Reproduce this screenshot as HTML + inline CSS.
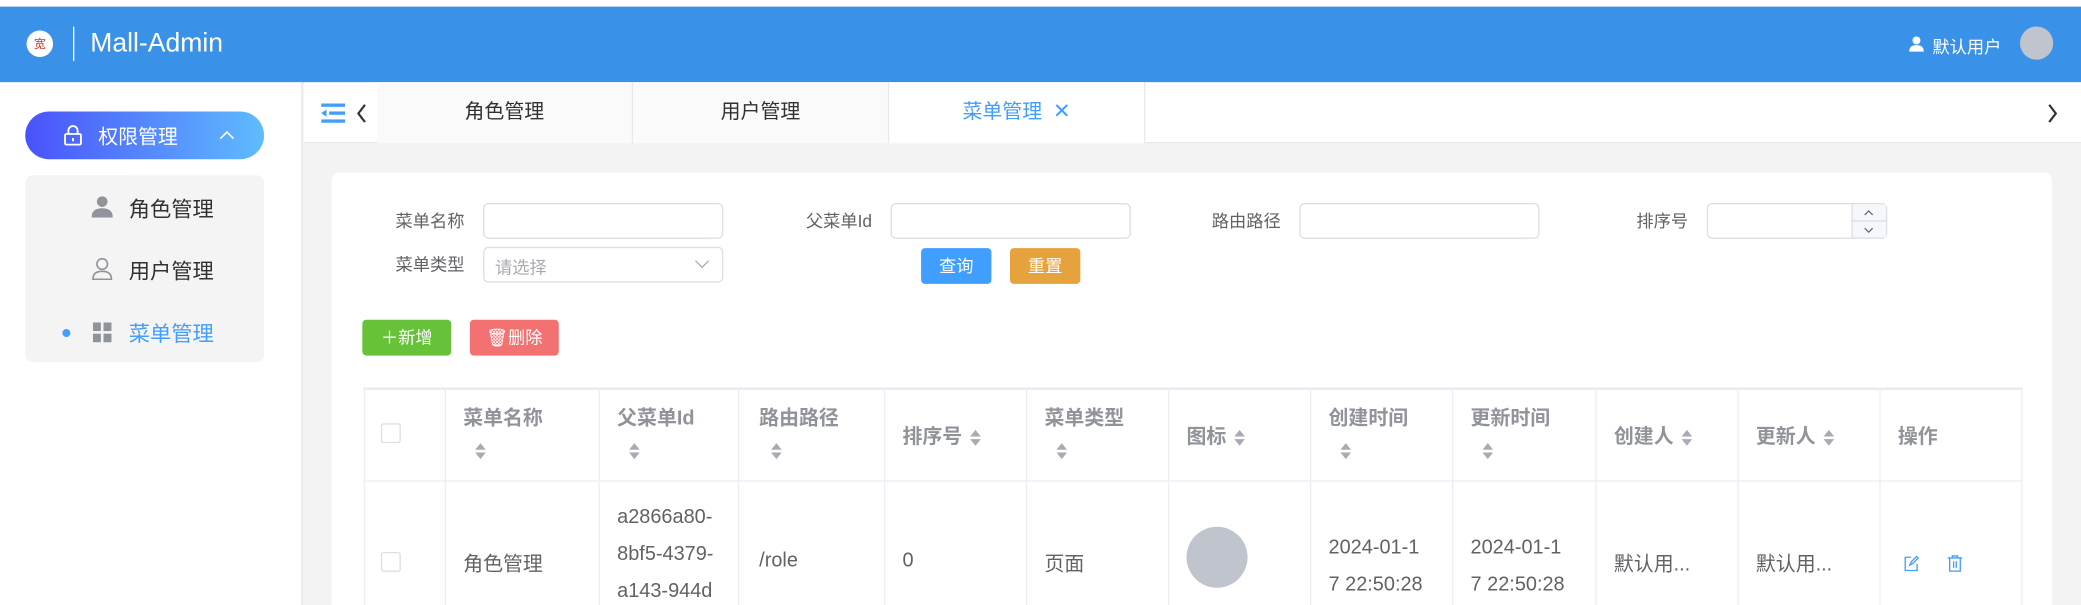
<!DOCTYPE html>
<html><head><meta charset="utf-8"><style>
*{box-sizing:border-box;margin:0;padding:0}
html,body{width:2081px;height:605px;overflow:hidden;background:#fff}
#root{position:absolute;left:0;top:0;width:1568px;height:456px;transform:scale(1.3272,1.3268);transform-origin:0 0;font-family:"Liberation Sans","Noto Sans CJK SC",sans-serif;background:#f3f3f3;overflow:hidden}
.a{position:absolute}
.hdr{left:0;top:5px;width:1568px;height:57px;background:#3a92e8}
.sb{left:0;top:62px;width:228px;height:400px;background:#fff;border-right:1px solid #e6e6e6}
.pill{left:19px;top:84px;width:180px;height:36px;border-radius:18px;background:linear-gradient(90deg,#4a52fb,#5fbcfe);color:#fff;font-size:15px}
.sub{left:19px;top:132px;width:180px;height:141px;border-radius:6px;background:#f4f4f5}
.mi{font-size:16px;color:#303133}
.tabs{left:229px;top:62px;width:1339px;height:46px;background:#fff;border-bottom:1px solid #e8e8e8}
.tab{top:0;height:46px;width:193px;text-align:center;line-height:46px;font-size:15px;color:#303133;border-right:1px solid #e8e8e8;background:#fafafa}
.card{left:250px;top:130px;width:1296px;height:340px;background:#fff;border-radius:6px}
.lbl{font-size:13px;color:#606266;text-align:right;width:100px;line-height:27px}
.inp{height:27px;border:1px solid #dcdfe6;border-radius:4px;background:#fff}
.btn{height:27px;line-height:27px;text-align:center;color:#fff;font-size:13px;border-radius:3px}
.th{font-size:15px;font-weight:bold;color:#909399}
.td{font-size:15px;color:#606266}
.car{display:inline-block;width:8px;height:12px;position:relative;vertical-align:middle}
.car.a{position:absolute}
.car:before{content:"";position:absolute;left:0;top:0;border:4px solid transparent;border-bottom:5px solid #a8abb2;border-top:0}
.car:after{content:"";position:absolute;left:0;top:7px;border:4px solid transparent;border-top:5px solid #a8abb2;border-bottom:0}
.vl{top:292px;width:1px;height:170px;background:#ebeef5}
.cb{width:15px;height:15px;border:1px solid #dcdfe6;border-radius:2px;background:#fff}
</style></head><body><div id="root">
<div class="a" style="left:0;top:0;width:1568px;height:5px;background:#fff"></div>
<div class="a hdr"></div>
<div class="a" style="left:20px;top:23px;width:20px;height:20px;border-radius:50%;background:#fff;color:#c0392b;font-size:9px;text-align:center;line-height:20px">宽</div>
<div class="a" style="left:55px;top:20px;width:1px;height:26px;background:#fff"></div>
<div class="a" style="left:68px;top:22px;color:#fff;font-size:20px">Mall-Admin</div>
<svg class="a" style="left:1438px;top:27px" width="12" height="12" viewBox="0 0 12 12"><circle cx="6" cy="3.5" r="3" fill="#fff"/><path d="M0.5 12 Q0.5 7 6 7 Q11.5 7 11.5 12Z" fill="#fff"/></svg>
<div class="a" style="left:1456px;top:25px;color:#fff;font-size:13px">默认用户</div>
<div class="a" style="left:1522px;top:20px;width:25px;height:25px;border-radius:50%;background:#c0c4cc"></div>

<div class="a sb"></div>
<div class="a pill"></div>
<svg class="a" style="left:48px;top:94px" width="14" height="16" viewBox="0 0 14 16"><rect x="1" y="7" width="12" height="8" rx="1" fill="none" stroke="#fff" stroke-width="1.4"/><path d="M3.5 7V4.5a3.5 3.5 0 0 1 7 0V7" fill="none" stroke="#fff" stroke-width="1.4"/><path d="M7 10v2.5" stroke="#fff" stroke-width="1.4"/></svg>
<div class="a" style="left:74px;top:92px;color:#fff;font-size:15px">权限管理</div>
<svg class="a" style="left:165px;top:98px" width="12" height="8" viewBox="0 0 12 8"><path d="M1 6.5L6 1.5 11 6.5" fill="none" stroke="#fff" stroke-width="1.2"/></svg>
<div class="a sub"></div>
<svg class="a" style="left:69px;top:147px" width="16" height="17" viewBox="0 0 16 17"><circle cx="8" cy="5" r="4" fill="#909399"/><path d="M0 17 Q0 10 8 10 Q16 10 16 17Z" fill="#909399"/></svg>
<div class="a mi" style="left:97px;top:144px">角色管理</div>
<svg class="a" style="left:69px;top:194px" width="16" height="17" viewBox="0 0 16 17"><circle cx="8" cy="5" r="4" fill="none" stroke="#909399" stroke-width="1.2"/><path d="M1 16.5 Q1 10.5 8 10.5 Q15 10.5 15 16.5Z" fill="none" stroke="#909399" stroke-width="1.2"/></svg>
<div class="a mi" style="left:97px;top:191px">用户管理</div>
<div class="a" style="left:47px;top:248px;width:6px;height:6px;border-radius:50%;background:#409eff"></div>
<svg class="a" style="left:70px;top:243px" width="14" height="15" viewBox="0 0 14 15"><rect x="0" y="0" width="6" height="6.5" fill="#909399"/><rect x="8" y="0" width="6" height="6.5" fill="#909399"/><rect x="0" y="8.5" width="6" height="6.5" fill="#909399"/><rect x="8" y="8.5" width="6" height="6.5" fill="#909399"/></svg>
<div class="a mi" style="left:97px;top:238px;color:#409eff">菜单管理</div>

<div class="a tabs"></div>
<svg class="a" style="left:242px;top:78px" width="18" height="15" viewBox="0 0 18 15"><rect x="0" y="0" width="18" height="2.5" fill="#409eff"/><rect x="6" y="6" width="12" height="2.5" fill="#409eff"/><rect x="0" y="12" width="18" height="2.5" fill="#409eff"/><path d="M0 7.25L4 4.5V10Z" fill="#409eff"/></svg>
<svg class="a" style="left:268px;top:78px" width="9" height="15" viewBox="0 0 9 15"><path d="M7 1L2 7.5 7 14" fill="none" stroke="#303133" stroke-width="1.6"/></svg>
<div class="a tab" style="left:284px;top:62px">角色管理</div>
<div class="a tab" style="left:477px;top:62px">用户管理</div>
<div class="a tab" style="left:670px;top:62px;background:#fff;color:#409eff">菜单管理 <span style="color:#409eff;font-size:16px;margin-left:4px">✕</span></div>
<svg class="a" style="left:1542px;top:78px" width="9" height="15" viewBox="0 0 9 15"><path d="M2 1L7 7.5 2 14" fill="none" stroke="#303133" stroke-width="1.6"/></svg>

<div class="a card"></div>
<div class="a lbl" style="left:250px;top:153px">菜单名称</div>
<div class="a inp" style="left:364px;top:153px;width:181px"></div>
<div class="a lbl" style="left:557px;top:153px">父菜单Id</div>
<div class="a inp" style="left:671px;top:153px;width:181px"></div>
<div class="a lbl" style="left:865px;top:153px">路由路径</div>
<div class="a inp" style="left:979px;top:153px;width:181px"></div>
<div class="a lbl" style="left:1172px;top:153px">排序号</div>
<div class="a inp" style="left:1286px;top:153px;width:136px"></div>
<div class="a" style="left:1395px;top:154px;width:26px;height:25px;border-left:1px solid #dcdfe6;background:#f5f7fa"></div>
<div class="a" style="left:1395px;top:166px;width:26px;height:1px;background:#dcdfe6"></div>
<svg class="a" style="left:1403px;top:157px" width="10" height="20" viewBox="0 0 10 20"><path d="M2 5L5 2 8 5M2 15L5 18 8 15" fill="none" stroke="#606266" stroke-width="0.9"/></svg>
<div class="a lbl" style="left:250px;top:186px">菜单类型</div>
<div class="a inp" style="left:364px;top:186px;width:181px"></div>
<div class="a" style="left:373px;top:191px;font-size:13px;color:#a8abb2">请选择</div>
<svg class="a" style="left:523px;top:195px" width="12" height="8" viewBox="0 0 12 8"><path d="M1 1.5L6 6.5 11 1.5" fill="none" stroke="#a8abb2" stroke-width="1"/></svg>
<div class="a btn" style="left:694px;top:187px;width:53px;background:#409eff">查询</div>
<div class="a btn" style="left:761px;top:187px;width:53px;background:#e6a23c">重置</div>
<div class="a btn" style="left:273px;top:241px;width:67px;background:#67c23a">＋新增</div>
<div class="a btn" style="left:354px;top:241px;width:67px;background:#f37171">🗑︎删除</div>

<div class="a" style="left:274px;top:292px;width:1250px;height:170px;border:1px solid #ebeef5;border-top:2px solid #e8ecf2"></div>
<div class="a" style="left:274px;top:362px;width:1250px;height:1px;background:#ebeef5"></div>
<div class="a vl" style="left:335px"></div><div class="a vl" style="left:451px"></div><div class="a vl" style="left:556px"></div><div class="a vl" style="left:666px"></div><div class="a vl" style="left:773px"></div><div class="a vl" style="left:880px"></div><div class="a vl" style="left:987px"></div><div class="a vl" style="left:1094px"></div><div class="a vl" style="left:1202px"></div><div class="a vl" style="left:1309px"></div><div class="a vl" style="left:1416px"></div>
<div class="a cb" style="left:287px;top:319px"></div>
<div class="a th" style="left:349px;top:304px">菜单名称</div><span class="a car" style="left:358px;top:334px"></span>
<div class="a th" style="left:465px;top:304px">父菜单Id</div><span class="a car" style="left:474px;top:334px"></span>
<div class="a th" style="left:572px;top:304px">路由路径</div><span class="a car" style="left:581px;top:334px"></span>
<div class="a th" style="left:680px;top:318px">排序号 <span class="car" style="margin-left:2px"></span></div>
<div class="a th" style="left:787px;top:304px">菜单类型</div><span class="a car" style="left:796px;top:334px"></span>
<div class="a th" style="left:894px;top:318px">图标 <span class="car" style="margin-left:2px"></span></div>
<div class="a th" style="left:1001px;top:304px">创建时间</div><span class="a car" style="left:1010px;top:334px"></span>
<div class="a th" style="left:1108px;top:304px">更新时间</div><span class="a car" style="left:1117px;top:334px"></span>
<div class="a th" style="left:1216px;top:318px">创建人 <span class="car" style="margin-left:2px"></span></div>
<div class="a th" style="left:1323px;top:318px">更新人 <span class="car" style="margin-left:2px"></span></div>
<div class="a th" style="left:1430px;top:318px">操作</div>

<div class="a cb" style="left:287px;top:416px"></div>
<div class="a td" style="left:349px;top:414px">角色管理</div>
<div class="a td" style="left:465px;top:376px;line-height:28px">a2866a80-<br>8bf5-4379-<br>a143-944d</div>
<div class="a td" style="left:572px;top:414px">/role</div>
<div class="a td" style="left:680px;top:414px">0</div>
<div class="a td" style="left:787px;top:414px">页面</div>
<div class="a" style="left:894px;top:397px;width:46px;height:46px;border-radius:50%;background:#c0c4cc"></div>
<div class="a td" style="left:1001px;top:399px;line-height:28px">2024-01-1<br>7 22:50:28</div>
<div class="a td" style="left:1108px;top:399px;line-height:28px">2024-01-1<br>7 22:50:28</div>
<div class="a td" style="left:1216px;top:414px">默认用...</div>
<div class="a td" style="left:1323px;top:414px">默认用...</div>
<svg class="a" style="left:1434px;top:418px" width="12" height="13" viewBox="0 0 12 13"><path d="M6 2H1.5v10h9V7" fill="none" stroke="#409eff" stroke-width="1"/><path d="M5 8l1-2.5L10 1.5l1.2 1.2-4 4Z" fill="none" stroke="#409eff" stroke-width="1"/></svg>
<svg class="a" style="left:1467px;top:418px" width="12" height="13" viewBox="0 0 12 13"><path d="M0.5 2.5h11M4 2.5V1h4v1.5M2 2.5V12.5h8V2.5M5 5v5M7 5v5" fill="none" stroke="#409eff" stroke-width="1"/></svg>
</div></body></html>
